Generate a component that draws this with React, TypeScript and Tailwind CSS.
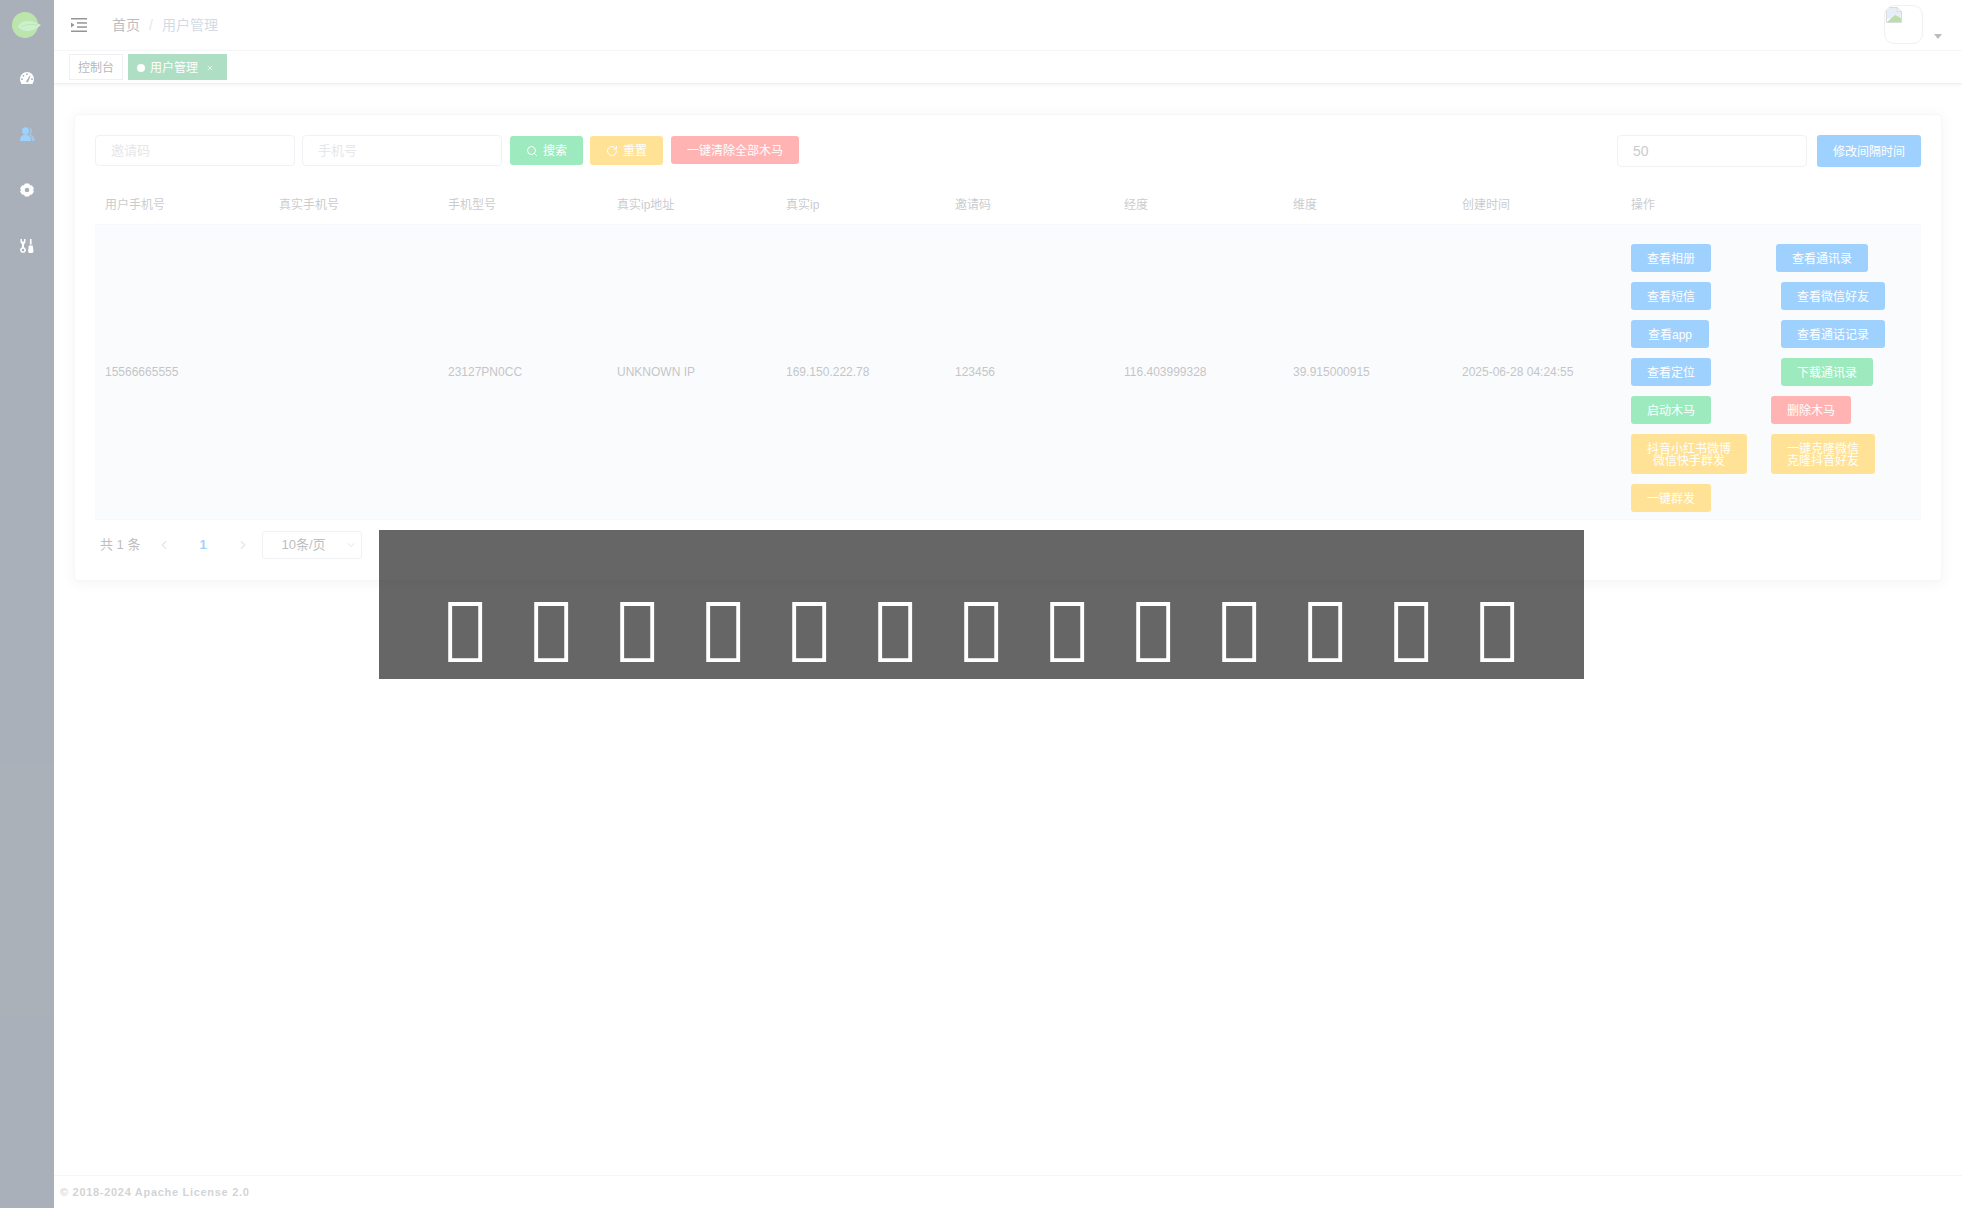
import { ChevronDown, ChevronLeft, ChevronRight, RotateCw, Search, X } from 'lucide-react';

const font = { fontFamily: '"Liberation Sans", "Noto Sans CJK SC", sans-serif' };
const toastFont = { fontFamily: '"DejaVu Sans", sans-serif' };

const headers = ['用户手机号', '真实手机号', '手机型号', '真实ip地址', '真实ip', '邀请码', '经度', '维度', '创建时间', '操作'];
const cells = ['15566665555', '', '23127PN0CC', 'UNKNOWN IP', '169.150.222.78', '123456', '116.403999328', '39.915000915', '2025-06-28 04:24:55'];

const blue = 'bg-[#1890ff]';
const green = 'bg-[#13ce66]';
const red = 'bg-[#ff4949]';
const yellow = 'bg-[#ffba00]';

function Btn({ color, className = '', children }: { color: string; className?: string; children: React.ReactNode }) {
  return (
    <button className={`${color} ${className} rounded-[3px] px-4 pt-[9px] pb-[7px] text-xs leading-3 text-white whitespace-nowrap`}>
      {children}
    </button>
  );
}

function Logo() {
  return (
    <svg width="30" height="28" viewBox="0 0 30 28">
      <circle cx="13" cy="14" r="13" fill="#5ec23c" />
      <path d="M6 16 C9 9 18 8 29 14 C22 21 12 22 6 16 Z" fill="#86dc8c" />
      <path d="M9 16 C14 13 20 13 26 14" stroke="#5ec23c" strokeWidth="1" fill="none" />
    </svg>
  );
}

function DashboardIcon() {
  return (
    <svg width="14" height="12" viewBox="0 0 14 12" fill="#fff">
      <path d="M7 0a7 7 0 0 0-7 7c0 1.800.6 3.500 1.600 5h10.800c1-1.500 1.600-3.200 1.600-5a7 7 0 0 0-7-7Z" />
      <g fill="#304156">
        <circle cx="7" cy="2.200" r=".9" />
        <circle cx="3.400" cy="3.800" r=".9" />
        <circle cx="2" cy="7.200" r=".9" />
        <circle cx="12" cy="7.200" r=".9" />
        <path d="M6 9.500 9.800 3.400l.8.400-2.700 6.600Z" />
      </g>
    </svg>
  );
}

function UsersIcon() {
  return (
    <svg width="15" height="14" viewBox="0 0 15 14" fill="#1890ff">
      <circle cx="5.500" cy="3.800" r="3.600" />
      <path d="M0 14c0-4 2-6.500 5.500-6.500S11 10 11 14Z" />
      <path opacity=".7" d="M9.500.6a3.500 3.500 0 0 1 .6 6.500c2.900.8 4.900 3.300 4.900 6.900h-3c0-2.900-1-5-3.200-6.300 1.900-1.900 2-4.900.7-7.100Z" />
    </svg>
  );
}

function GearIcon() {
  return (
    <svg width="14" height="14" viewBox="0 0 14 14">
      <path fill="#fff" fillRule="evenodd" d="M5 .5h4l1 1.700 2 .2 2 3.100-1 1.500 1 1.500-2 3.100-2 .2-1 1.700H5l-1-1.700-2-.2-2-3.100L1 7 0 5.500l2-3.100 2-.2ZM7 4.700a2.300 2.300 0 1 0 0 4.600 2.300 2.300 0 0 0 0-4.600Z" />
    </svg>
  );
}

function ToolsIcon() {
  return (
    <svg width="14" height="14" viewBox="0 0 14 14" fill="#fff">
      <path fillRule="evenodd" d="M.5 0 2 0v2.500h2V0h1.500v3.500L4 5.500V8.200a2.900 2.900 0 1 1-2 0V5.500L.5 3.500ZM3 9.800a1.300 1.300 0 1 0 0 2.600 1.300 1.300 0 0 0 0-2.600Z" />
      <path d="M10 0h1.500l.2 5.500h-1.900ZM8.800 6.500h3.900l.8 5.500a2.300 2 0 0 1-5.400 0Z" />
    </svg>
  );
}

function IndentIcon() {
  return (
    <svg width="16" height="14" viewBox="0 0 16 14" fill="#000">
      <rect x="0" y="0" width="16" height="1.500" />
      <rect x="6" y="4.200" width="10" height="1.500" />
      <rect x="6" y="8.300" width="10" height="1.500" />
      <rect x="0" y="12.500" width="16" height="1.500" />
      <path d="M0 4.500 3.500 7 0 9.500Z" />
    </svg>
  );
}

function BrokenImage() {
  return (
    <svg width="16" height="16" viewBox="0 0 16 16">
      <path d="M.5.500h11l4 4v11H.5Z" fill="#fff" stroke="#aaa" />
      <path d="M1 1h10v4h4v5L1 12Z" fill="#c5d8f5" />
      <path d="M1 15 9 8l6 3v4Z" fill="#5cb032" />
      <path d="M11 .5v4h4.500" fill="#eee" stroke="#aaa" />
    </svg>
  );
}

function ActionRows() {
  return (
    <div className="flex flex-col gap-[10px]">
      <div className="flex">
        <Btn color={blue}>查看相册</Btn>
        <Btn color={blue} className="ml-[65px]">查看通讯录</Btn>
      </div>
      <div className="flex">
        <Btn color={blue}>查看短信</Btn>
        <Btn color={blue} className="ml-[70px]">查看微信好友</Btn>
      </div>
      <div className="flex">
        <Btn color={blue} className="w-[78px]">查看app</Btn>
        <Btn color={blue} className="ml-[72px]">查看通话记录</Btn>
      </div>
      <div className="flex">
        <Btn color={blue}>查看定位</Btn>
        <Btn color={green} className="ml-[70px]">下载通讯录</Btn>
      </div>
      <div className="flex">
        <Btn color={green}>启动木马</Btn>
        <Btn color={red} className="ml-[60px]">删除木马</Btn>
      </div>
      <div className="flex">
        <Btn color={yellow}>抖音小红书微博<br />微信快手群发</Btn>
        <Btn color={yellow} className="ml-[24px]">一键克隆微信<br />克隆抖音好友</Btn>
      </div>
      <div className="flex">
        <Btn color={yellow}>一键群发</Btn>
      </div>
    </div>
  );
}

export default function App() {
  return (
    <div className="relative h-screen w-full bg-white overflow-hidden" style={font}>
      <div className="flex h-full opacity-[0.41]">
        {/* Sidebar */}
        <aside className="w-[54px] shrink-0 bg-[#304156] flex flex-col items-center">
          <div className="h-[50px] w-full flex items-center pl-3">
            <Logo />
          </div>
          {[<DashboardIcon />, <UsersIcon />, <GearIcon />, <ToolsIcon />].map((icon, i) => (
            <div key={i} className="h-14 w-full flex items-center justify-center">
              {icon}
            </div>
          ))}
        </aside>

        <div className="flex-1 min-w-0 flex flex-col">
          {/* Navbar */}
          <header className="h-[51px] shrink-0 flex items-center border-b border-[#eef0f3] pl-[17px] pr-[20px]">
            <IndentIcon />
            <nav className="ml-[25px] flex items-center text-sm">
              <span className="text-[#606266]">首页</span>
              <span className="mx-[9px] text-[#c0c4cc]">/</span>
              <span className="text-[#97a8be]">用户管理</span>
            </nav>
            <div className="ml-auto flex items-end self-start pt-[5px]">
              <div className="h-[39px] w-[39px] rounded-[10px] border border-[#ddd] overflow-hidden p-[1px]">
                <BrokenImage />
              </div>
              <span className="ml-[11px] mb-[5px] border-x-[4px] border-t-[5px] border-x-transparent border-t-[#5a5e66]" />
            </div>
          </header>

          {/* Tags */}
          <div className="h-[33px] shrink-0 flex items-start gap-[5px] pl-[15px] pt-[3px] border-b border-[#d8dce5] shadow-[0_1px_3px_rgba(0,0,0,0.12)]">
            <span className="h-[26px] w-[54px] pt-[1px] flex items-center justify-center border border-[#d8dce5] text-xs text-[#495060]">控制台</span>
            <span className="h-[26px] w-[99px] pt-[1px] flex items-center bg-[#3db274] pl-[9px] text-xs text-white">
              <span className="h-2 w-2 rounded-full bg-white" />
              <span className="ml-[5px]">用户管理</span>
              <X size={8} className="ml-[8px]" />
            </span>
          </div>

          {/* Content */}
          <main className="flex-1 min-h-0 pl-5 pr-5 pt-[30px]">
            <section className="rounded border border-[#ebeef5] bg-white p-5 shadow-[0_2px_12px_rgba(0,0,0,0.1)]">
              <div className="flex items-start">
                <div className="h-[31px] w-[200px] rounded border border-[#dcdfe6] pl-[15px] flex items-center text-[13px] text-[#c0c4cc]">邀请码</div>
                <div className="ml-[7px] h-[31px] w-[200px] rounded border border-[#dcdfe6] pl-[15px] flex items-center text-[13px] text-[#c0c4cc]">手机号</div>
                <button className="ml-[8px] mt-[1px] pt-[1px] h-[29px] w-[73px] rounded-[3px] bg-[#13ce66] flex items-center justify-center gap-[5px] text-xs text-white">
                  <Search size={12} />搜索
                </button>
                <button className="ml-[7px] mt-[1px] pt-[1px] h-[29px] w-[73px] rounded-[3px] bg-[#ffba00] flex items-center justify-center gap-[5px] text-xs text-white">
                  <RotateCw size={12} />重置
                </button>
                <button className="ml-[8px] mt-[1px] pt-[1px] h-[28px] w-[128px] rounded-[3px] bg-[#ff4949] text-xs text-white">一键清除全部木马</button>
                <div className="ml-auto h-[32px] w-[190px] rounded border border-[#dcdfe6] pl-[15px] flex items-center text-sm text-[#808388]">50</div>
                <button className="ml-[10px] pt-[1px] h-[32px] w-[104px] rounded-[3px] bg-[#1890ff] text-xs text-white">修改间隔时间</button>
              </div>

              {/* Table */}
              <div className="mt-[18px] grid grid-cols-[174px_repeat(8,169px)_300px] h-10 items-center border-b border-[#ebeef5] text-xs text-[#808388]">
                {headers.map((h) => (
                  <div key={h} className="pl-[10px]">{h}</div>
                ))}
              </div>
              <div className="grid grid-cols-[174px_repeat(8,169px)_300px] h-[295px] items-center border-b border-[#ebeef5] bg-[#f3f6fc] text-xs text-[#707377]">
                {cells.map((c, i) => (
                  <div key={i} className="pl-[10px]">{c}</div>
                ))}
                <div className="self-start pt-[19px] pl-[10px]">
                  <ActionRows />
                </div>
              </div>

              {/* Pagination */}
              <div className="mt-[11px] mb-[1px] flex items-center h-[28px] pl-[5px] text-[13px] text-[#606266]">
                <span>共 1 条</span>
                <ChevronLeft size={14} className="ml-[17px] text-[#c0c4cc]" />
                <span className="ml-[28px] w-[8px] font-bold text-[#1890ff]">1</span>
                <ChevronRight size={14} className="ml-[29px] text-[#c0c4cc]" />
                <div className="ml-[12px] h-[28px] w-[100px] rounded-[3px] border border-[#dcdfe6] flex items-center pl-[18px]">
                  10条/页
                  <ChevronDown size={12} className="ml-[19px] text-[#c0c4cc]" />
                </div>
              </div>
            </section>
          </main>

          {/* Footer */}
          <footer className="h-[33px] shrink-0 flex items-center border-t border-[#e7eaec] pl-[6px] text-[11px] font-bold tracking-[0.7px] text-[#94979b]">
            © 2018-2024 Apache License 2.0
          </footer>
        </div>
      </div>

      {/* Toast */}
      <div
        className="absolute left-[379px] top-[530px] h-[149px] w-[1205px] bg-black/60 overflow-hidden pt-[46px] pl-[66px] text-[68px] tracking-[45.2px] text-white whitespace-nowrap"
        style={toastFont}
      >
        {'\uE000\uE001\uE002\uE003\uE004\uE005\uE006\uE007\uE008\uE009\uE00A\uE00B\uE00C'}
      </div>
    </div>
  );
}
